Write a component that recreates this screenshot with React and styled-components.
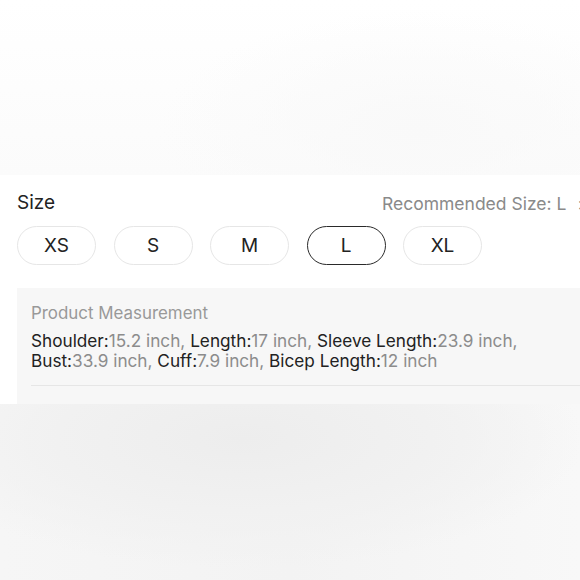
import styled, { createGlobalStyle } from 'styled-components';

const GlobalStyle = createGlobalStyle`
  html, body {
    margin: 0;
    padding: 0;
    background: #ffffff;
  }
  body {
    font-family: Inter, "Liberation Sans", Arial, sans-serif;
    color: #222222;
  }
`;

const Page = styled.div`
  width: 580px;
  height: 580px;
  overflow: hidden;
  display: flex;
  flex-direction: column;
`;

const TopBlur = styled.div`
  height: 175px;
  flex-shrink: 0;
  background:
    radial-gradient(ellipse 260px 120px at 72% 75%, #f9f9f9 0%, rgba(250, 250, 250, 0) 100%),
    linear-gradient(180deg, #ffffff 0%, #fbfbfb 100%);
`;

const Section = styled.div`
  height: 229px;
  flex-shrink: 0;
  overflow: hidden;
  background: #ffffff;
  padding: 16px 0 0 17px;
  box-sizing: border-box;
`;

const Header = styled.div`
  display: flex;
  justify-content: space-between;
  align-items: baseline;
  height: 35px;
`;

const Title = styled.h2`
  margin: 0;
  font-size: 19px;
  line-height: 23px;
  font-weight: 400;
  color: #222;
`;

const Recommended = styled.div`
  display: flex;
  align-items: baseline;
  gap: 11px;
  font-size: 17.5px;
  color: #8a8a8a;
  margin-right: -8px;
  transform: translateY(1px);
`;

const Chevron = styled.span`
  font-size: 16px;
  color: #777;
`;

const SizeRow = styled.div`
  display: flex;
  gap: 17.5px;
`;

const SizeButton = styled.button`
  width: 79px;
  height: 39px;
  border-radius: 20px;
  box-sizing: border-box;
  background: #fff;
  border: ${({ $active }) => ($active ? '1.5px solid #2a2a2a' : '1px solid #e6e6e6')};
  font-family: inherit;
  font-size: 19px;
  color: #222;
  padding: 0;
`;

const MeasureBox = styled.div`
  margin-top: 23px;
  background: #f7f7f7;
  padding: 15px 0 0 14px;
  height: 200px;
`;

const BoxTitle = styled.div`
  font-size: 16.9px;
  color: #999999;
  line-height: 20px;
  margin-bottom: 8px;
`;

const Specs = styled.div`
  font-size: 17.2px;
  line-height: 20px;
  color: #222;
  padding-right: 40px;
`;

const Value = styled.span`
  color: #8c8c8c;
`;

const Divider = styled.div`
  height: 1px;
  background: #e6e6e6;
  margin-top: 14px;
`;

const BottomBlur = styled.div`
  flex: 1;
  background:
    radial-gradient(ellipse 340px 130px at 42% 20%, #ededed 0%, #f1f1f1 55%, rgba(246, 246, 246, 0) 100%),
    linear-gradient(90deg, #f6f6f6 0%, #f3f3f3 50%, #f8f8f8 100%);
`;

const sizes = ['XS', 'S', 'M', 'L', 'XL'];

const specs = [
  ['Shoulder', '15.2 inch'],
  ['Length', '17 inch'],
  ['Sleeve Length', '23.9 inch'],
  ['Bust', '33.9 inch'],
  ['Cuff', '7.9 inch'],
  ['Bicep Length', '12 inch'],
];

export default function App() {
  return (
    <Page>
      <GlobalStyle />
      <TopBlur />
      <Section>
        <Header>
          <Title>Size</Title>
          <Recommended>
            <span>Recommended Size: L</span>
            <Chevron>&gt;</Chevron>
          </Recommended>
        </Header>
        <SizeRow>
          {sizes.map((s) => (
            <SizeButton key={s} $active={s === 'L'}>
              {s}
            </SizeButton>
          ))}
        </SizeRow>
        <MeasureBox>
          <BoxTitle>Product Measurement</BoxTitle>
          <Specs>
            {specs.map(([label, value], i) => (
              <span key={label}>
                {label}:<Value>{value}{i < specs.length - 1 ? ',' : ''}</Value>
                {i < specs.length - 1 ? ' ' : ''}
              </span>
            ))}
          </Specs>
          <Divider />
        </MeasureBox>
      </Section>
      <BottomBlur />
    </Page>
  );
}
